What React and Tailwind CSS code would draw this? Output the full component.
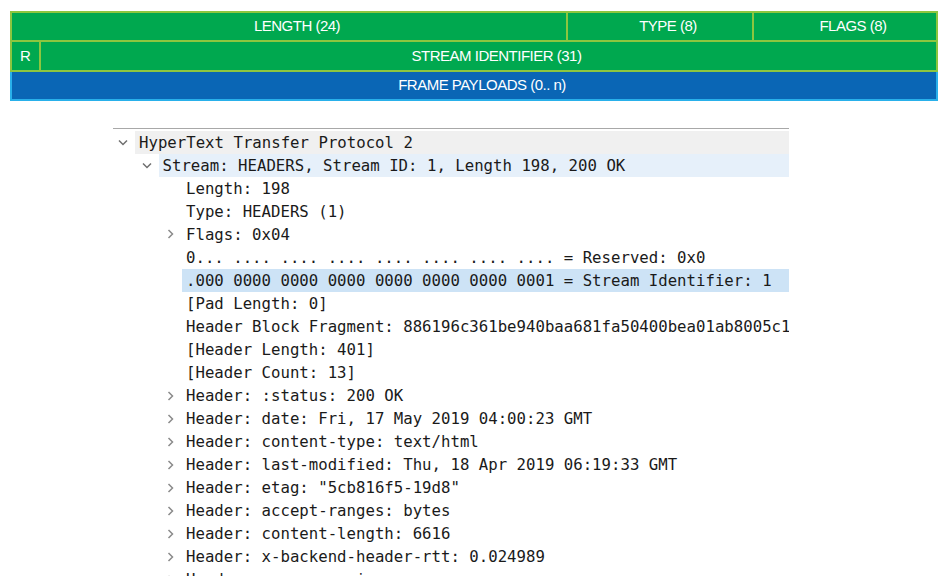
import React from 'react';

const rows = [
  { level: 0, icon: 'down', text: 'HyperText Transfer Protocol 2', bg: 'bg-[#f0f0f0]' },
  { level: 1, icon: 'down', text: 'Stream: HEADERS, Stream ID: 1, Length 198, 200 OK', bg: 'bg-[#e6f0fa]' },
  { level: 2, text: 'Length: 198' },
  { level: 2, text: 'Type: HEADERS (1)' },
  { level: 2, icon: 'right', text: 'Flags: 0x04' },
  { level: 2, text: '0... .... .... .... .... .... .... .... = Reserved: 0x0' },
  { level: 2, text: '.000 0000 0000 0000 0000 0000 0000 0001 = Stream Identifier: 1', bg: 'bg-[#cde3f6]' },
  { level: 2, text: '[Pad Length: 0]' },
  { level: 2, text: 'Header Block Fragment: 886196c361be940baa681fa50400bea01ab8005c1f6a8e3b' },
  { level: 2, text: '[Header Length: 401]' },
  { level: 2, text: '[Header Count: 13]' },
  { level: 2, icon: 'right', text: 'Header: :status: 200 OK' },
  { level: 2, icon: 'right', text: 'Header: date: Fri, 17 May 2019 04:00:23 GMT' },
  { level: 2, icon: 'right', text: 'Header: content-type: text/html' },
  { level: 2, icon: 'right', text: 'Header: last-modified: Thu, 18 Apr 2019 06:19:33 GMT' },
  { level: 2, icon: 'right', text: 'Header: etag: "5cb816f5-19d8"' },
  { level: 2, icon: 'right', text: 'Header: accept-ranges: bytes' },
  { level: 2, icon: 'right', text: 'Header: content-length: 6616' },
  { level: 2, icon: 'right', text: 'Header: x-backend-header-rtt: 0.024989' },
  { level: 2, icon: 'right', text: 'Header: server: nginx' },
];

const indent = ['pl-0', 'pl-[23.5px]', 'pl-[47px]'];

function Chevron({ dir }) {
  if (dir === 'down') {
    return (
      <svg width="10" height="7" viewBox="0 0 10 7" className="ml-[5px]">
        <path d="M1 1.5 L5 5.5 L9 1.5" fill="none" stroke="#6f6f6f" strokeWidth="1.5" />
      </svg>
    );
  }
  if (dir === 'right') {
    return (
      <svg width="7" height="10" viewBox="0 0 7 10" className="ml-[7px]">
        <path d="M1.5 1 L5.5 5 L1.5 9" fill="none" stroke="#8a8a8a" strokeWidth="1.5" />
      </svg>
    );
  }
  return null;
}

function Cell({ className = '', children }) {
  return (
    <div className={`flex items-center justify-center pl-[16px] text-[15px] tracking-[-0.5px] text-white ${className}`}>
      {children}
    </div>
  );
}

export default function App() {
  return (
    <div className="w-[948px] h-[576px] overflow-hidden bg-white" style={{ fontFamily: '"Liberation Sans", Arial, sans-serif' }}>
      {/* HTTP/2 frame layout */}
      <div className="ml-[10px] mt-[11px] w-[928px]">
        <div className="flex h-[31px] border-2 border-[#8dc63f] bg-[#00a84f]">
          <Cell className="w-[554px]">LENGTH (24)</Cell>
          <Cell className="w-[186px] border-l-2 border-[#8dc63f]">TYPE (8)</Cell>
          <Cell className="flex-1 border-l-2 border-[#8dc63f]">FLAGS (8)</Cell>
        </div>
        <div className="flex h-[30px] border-x-2 border-b-2 border-[#8dc63f] bg-[#00a84f]">
          <div className="w-[27px] flex items-center justify-center text-[15px] text-white">R</div>
          <Cell className="flex-1 border-l-2 border-[#8dc63f]">STREAM IDENTIFIER (31)</Cell>
        </div>
        <div className="flex h-[29px] border-x-2 border-b-2 border-[#29b0ea] bg-[#0a66b5]">
          <Cell className="flex-1">FRAME PAYLOADS (0.. n)</Cell>
        </div>
      </div>

      {/* Wireshark packet details */}
      <div
        className="ml-[113px] mt-[27px] w-[676px] border-t border-[#a8a8a8] pt-[1.5px] overflow-hidden text-[15.7px] text-[#1a1a1a]"
        style={{ fontFamily: '"DejaVu Sans Mono", "Liberation Mono", monospace' }}
      >
        {rows.map((r, i) => (
          <div key={i} className={`flex h-[23.06px] ${indent[r.level]}`}>
            <div className="w-[22px] shrink-0 flex items-center">
              <Chevron dir={r.icon} />
            </div>
            <div className={`flex-1 min-w-0 pl-[4px] leading-[23.06px] whitespace-pre overflow-hidden ${r.bg || ''}`}>
              {r.text}
            </div>
          </div>
        ))}
      </div>
    </div>
  );
}
